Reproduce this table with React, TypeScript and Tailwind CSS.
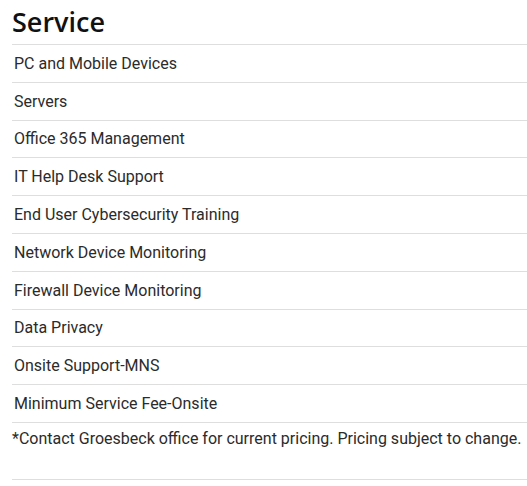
const services = [
  "PC and Mobile Devices",
  "Servers",
  "Office 365 Management",
  "IT Help Desk Support",
  "End User Cybersecurity Training",
  "Network Device Monitoring",
  "Firewall Device Monitoring",
  "Data Privacy",
  "Onsite Support-MNS",
  "Minimum Service Fee-Onsite",
];

export default function App() {
  return (
    <div className="w-[527px] h-[486px] bg-white pl-3 overflow-hidden">
      {/* Heading */}
      <h2 className="h-[44px] flex items-center font-['Open_Sans',sans-serif] font-semibold text-[27px] leading-none text-[#111] pb-[1px]">
        Service
      </h2>

      {/* Service list */}
      <ul className="font-['Roboto',sans-serif] text-[16px] text-[#2b2b2b]">
        {services.map((s) => (
          <li
            key={s}
            className="h-[37.8px] flex items-center border-t border-[#dedede] pl-[2px] pt-[1px]"
          >
            {s}
          </li>
        ))}
      </ul>

      {/* Note */}
      <div className="h-[58px] border-t border-b border-[#dedede] pt-[5px] font-['Roboto',sans-serif] text-[16px] leading-[22px] text-[#2b2b2b]">
        *Contact Groesbeck office for current pricing. Pricing subject to change.
      </div>
    </div>
  );
}
